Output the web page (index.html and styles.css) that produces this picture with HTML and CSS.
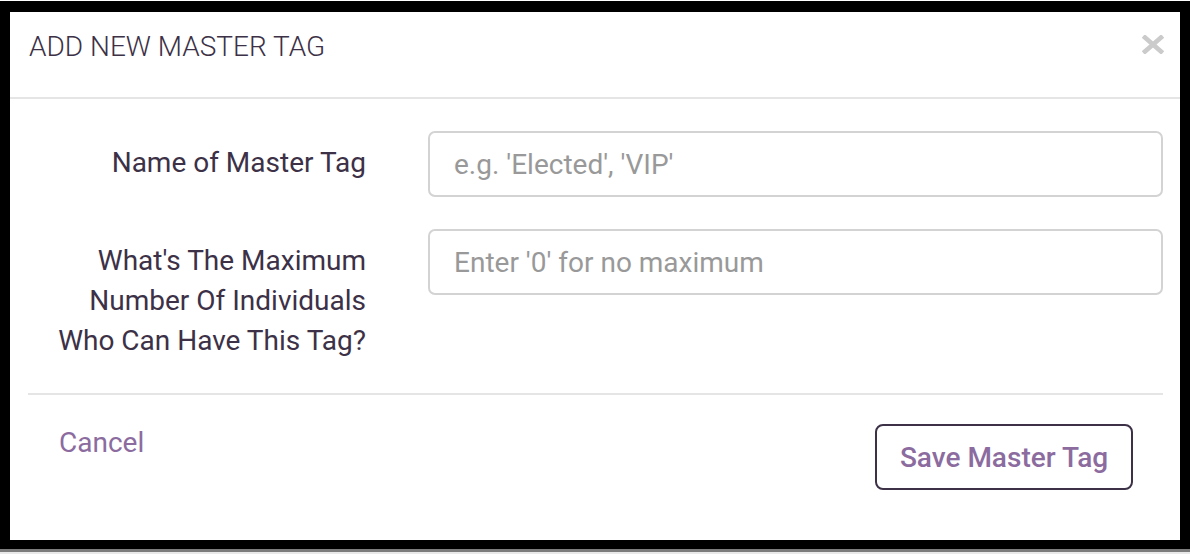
FILE: index.html
```html
<!DOCTYPE html>
<html lang="en">
<head>
<meta charset="utf-8">
<title>Add New Master Tag</title>
<link rel="stylesheet" href="styles.css">
</head>
<body>
<div class="backdrop">
  <div class="modal">
    <div class="modal-header">
      <h4 class="modal-title">ADD NEW MASTER TAG</h4>
      <button class="close" type="button" aria-label="Close">
        <svg width="22" height="19" viewBox="0 0 22 19"><path d="M3 2.5 L19 16.5 M19 2.5 L3 16.5" stroke="#cbcbcb" stroke-width="4.6" stroke-linecap="square" fill="none"/></svg>
      </button>
    </div>
    <div class="modal-body">
      <div class="form-row">
        <label class="form-label" for="tagname">Name of Master Tag</label>
        <input class="form-input" id="tagname" type="text" placeholder="e.g. 'Elected', 'VIP'">
      </div>
      <div class="form-row">
        <label class="form-label" for="tagmax">What's The Maximum<br>Number Of Individuals<br>Who Can Have This Tag?</label>
        <input class="form-input" id="tagmax" type="text" placeholder="Enter '0' for no maximum">
      </div>
      <div class="divider"></div>
      <div class="modal-footer">
        <a class="cancel-link" href="#">Cancel</a>
        <button class="save-btn" type="button">Save Master Tag</button>
      </div>
    </div>
  </div>
</div>
</body>
</html>
```

FILE: styles.css
```css
* { box-sizing: border-box; }

html, body {
  margin: 0;
  padding: 0;
  background: #e9e9e9;
  font-family: Roboto, "Liberation Sans", sans-serif;
  color: #3c3146;
}

body {
  border-top: 1px solid #fff;
}

.backdrop {
  background: #000;
  padding: 11px 10px 9px 10px;
  border-bottom: 3px solid #7c7c7c;
}

.modal {
  background: #fff;
  height: 528px;
  display: flex;
  flex-direction: column;
}

.modal-header {
  display: flex;
  justify-content: space-between;
  align-items: flex-start;
  height: 87px;
  padding: 15px 16px 0 19px;
  border-bottom: 2px solid #e5e5e5;
}

.modal-title {
  margin: 0;
  font-size: 28px;
  line-height: 40px;
  font-weight: 300;
  color: #3c3146;
  letter-spacing: 0;
}

.close {
  margin-top: 8px;
  padding: 0;
  border: 0;
  background: transparent;
  width: 22px;
  height: 19px;
  line-height: 0;
  cursor: pointer;
}

.modal-body {
  padding: 32px 17px 0 18px;
  display: flex;
  flex-direction: column;
}

.form-row {
  display: grid;
  grid-template-columns: 338px 1fr;
  column-gap: 62px;
  align-items: start;
  margin-bottom: 32px;
}

.form-row:last-of-type {
  margin-bottom: 31px;
}

.form-label {
  padding-top: 12px;
  text-align: right;
  font-size: 28px;
  line-height: 40px;
  font-weight: 400;
  color: #3c3146;
}

.form-input {
  height: 66px;
  width: 100%;
  border: 2px solid #d3d3d3;
  border-radius: 7px;
  padding: 0 24px;
  font-family: Roboto, "Liberation Sans", sans-serif;
  font-size: 28px;
  color: #3c3146;
  background: #fff;
  outline: none;
}

.form-input::placeholder {
  color: #999;
  opacity: 1;
}

.divider {
  height: 2px;
  background: #e5e5e5;
}

.modal-footer {
  display: flex;
  justify-content: space-between;
  align-items: flex-start;
  padding: 0 30px 0 31px;
}

.cancel-link {
  margin-top: 28px;
  font-size: 28px;
  line-height: 40px;
  color: #8c6c9f;
  text-decoration: none;
}

.save-btn {
  margin-top: 29px;
  height: 66px;
  width: 258px;
  border: 2px solid #3c3146;
  border-radius: 8px;
  background: #fff;
  font-family: Roboto, "Liberation Sans", sans-serif;
  font-size: 28px;
  font-weight: 500;
  color: #8c6c9f;
  padding: 0;
  cursor: pointer;
}
```
